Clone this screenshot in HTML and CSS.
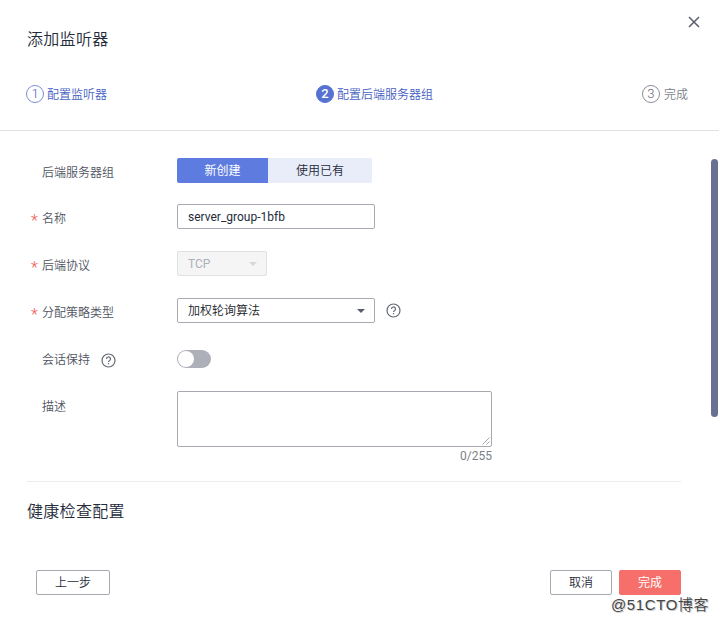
FILE: index.html
```html
<!DOCTYPE html>
<html lang="zh-CN">
<head>
<meta charset="utf-8">
<title>添加监听器</title>
<link rel="stylesheet" href="styles.css">
</head>
<body>
<main class="dialog">
  <header class="header">
    <div class="title-row">
      <h1 class="title">添加监听器</h1>
      <button class="close" aria-label="关闭"><svg width="12" height="12" viewBox="0 0 12 12"><path d="M1 1l10 10M11 1L1 11"/></svg></button>
    </div>
    <ol class="steps">
      <li class="step done"><span class="num">1</span><span class="name">配置监听器</span></li>
      <li class="step current"><span class="num">2</span><span class="name">配置后端服务器组</span></li>
      <li class="step"><span class="num">3</span><span class="name">完成</span></li>
    </ol>
  </header>
  <section class="body">
    <div class="form">
      <div class="row first"><span class="label">后端服务器组</span>
        <div class="tabs"><button class="tab active">新创建</button><button class="tab">使用已有</button></div></div>
      <div class="row"><span class="label"><i class="req">*</i>名称</span><div class="field">server_group-1bfb</div></div>
      <div class="row"><span class="label"><i class="req">*</i>后端协议</span><div class="field disabled">TCP<span class="caret"></span></div></div>
      <div class="row"><span class="label"><i class="req">*</i>分配策略类型</span><div class="field cjk">加权轮询算法<span class="caret"></span></div>
        <svg class="help" width="15" height="15" viewBox="0 0 15 15"><circle cx="7.5" cy="7.5" r="6.5"/><path d="M5.5 6a2 2 0 1 1 3 1.7Q7.5 8.2 7.5 9M7.5 10v1.3"/></svg></div>
      <div class="row"><span class="label">会话保持<svg class="help" width="15" height="15" viewBox="0 0 15 15"><circle cx="7.5" cy="7.5" r="6.5"/><path d="M5.5 6a2 2 0 1 1 3 1.7Q7.5 8.2 7.5 9M7.5 10v1.3"/></svg></span>
        <div class="toggle"><span class="knob"></span></div></div>
      <div class="row desc"><span class="label">描述</span>
        <div class="area-wrap"><div class="area"><svg width="8" height="8" viewBox="0 0 8 8"><path d="M0.5 7.5l7-7M4.5 7.5l3-3"/></svg></div><span class="count">0/255</span></div></div>
    </div>
    <h2 class="section-title">健康检查配置</h2>
    <div class="scrollbar"></div>
  </section>
  <footer class="footer">
    <button class="btn prev">上一步</button>
    <button class="btn">取消</button>
    <button class="btn primary">完成</button>
  </footer>
  <div class="watermark">@51CTO博客</div>
</main>
</body>
</html>
```
FILE: styles.css
```css
* { box-sizing: border-box; }
body {
  margin: 0;
  background: #fff;
  color: #252b3a;
  font: 350 12px/18px Roboto, "Noto Sans CJK SC", sans-serif;
}
button { font: inherit; color: inherit; padding: 0; border: 0; background: none; }
.dialog { position: relative; width: 719px; height: 622px; overflow: hidden; }
.header { height: 131px; border-bottom: 1px solid #dfe1e6; padding: 0 19px 0 27px; }
.title-row { display: flex; justify-content: space-between; height: 84px; }
.title { margin: 28px 0 0; font-size: 16px; line-height: 24px; font-weight: 350; letter-spacing: .3px; }
.close { width: 12px; height: 12px; margin-top: 16px; display: flex; }
.close path { stroke: #575d6c; stroke-width: 1.5; fill: none; }
.steps { display: flex; justify-content: space-between; list-style: none; margin: 0 12px 0 -1px; padding: 0; }
.step { display: flex; align-items: center; gap: 3px; height: 20px; color: #7b7f88; }
.name { padding-top: 2px; }
.num {
  width: 18px; height: 18px; border: 1px solid #8a8e99; border-radius: 50%;
  font-size: 13px; line-height: 16px; text-align: center; font-weight: 300;
}
.step.done, .step.current { color: #4660c2; }
.step.done .num { border-color: #7d8fd5; }
.step.current .num { background: #5571d2; border-color: #5571d2; color: #fff; font-weight: 500; }
.step:last-child { gap: 4px; }
.step:last-child .num { color: #666a74; }
.body { position: relative; height: 418px; padding: 27px 0 0 27px; }
.form { width: 654px; height: 324px; border-bottom: 1px solid #ebecee; }
.row { display: flex; align-items: center; height: 25px; margin-bottom: 22px; }
.row.first { margin-bottom: 21px; }
.label { position: relative; display: flex; align-items: center; width: 150px; padding: 5px 0 0 15px; color: #505562; }
.req { position: absolute; left: 4px; top: 7px; color: #f35a53; font: 300 16px/18px Roboto, sans-serif; }
.tabs { display: flex; border-radius: 2px; overflow: hidden; }
.tab { width: 104px; height: 25px; background: #e9edfa; }
.tab.active { width: 91px; background: #5e7ce0; color: #fff; font-weight: 400; }
.field {
  display: flex; align-items: center; justify-content: space-between;
  width: 198px; height: 25px; padding: 0 9px 0 10px;
  border: 1px solid #a7aab0; border-radius: 2px; color: #252b3a; font-weight: 400;
}
.field.cjk { color: #181c28; font-weight: 350; }
.field + .help { margin-left: 11px; }
.field.disabled { width: 90px; background: #f5f5f6; border-color: #dfe1e6; color: #adb0b8; }
.caret { border: 4px solid transparent; border-top-color: #575d6c; border-bottom: 0; }
.disabled .caret { border-top-color: #d5d7dc; }
.help { fill: none; stroke: #636873; stroke-width: 1.2; }
.label .help { margin-left: 11px; }
.toggle { width: 34px; height: 18px; margin-top: 3px; padding: 1px; border-radius: 9px; background: #adb0b8; }
.knob { display: block; width: 16px; height: 16px; border-radius: 50%; background: #fff; }
.row.desc { align-items: flex-start; height: 76px; margin: -1px 0 0; }
.desc .label { padding-top: 7px; }
.area-wrap { width: 315px; }
.area {
  display: flex; justify-content: flex-end; align-items: flex-end; height: 56px; padding: 1px;
  border: 1px solid #a7aab0; border-radius: 2px;
}
.area path { fill: none; stroke: #8a8e99; stroke-width: .8; }
.count { display: block; text-align: right; color: #7b7f88; font-weight: 400; }
.section-title { margin: 18px 0 0; font-size: 16px; line-height: 24px; font-weight: 350; letter-spacing: .3px; }
.scrollbar { position: absolute; left: 711px; top: 28px; width: 7px; height: 258px; border-radius: 4px; background: #6a7091; }
.footer { display: flex; gap: 7px; padding: 21px 38px 0 36px; }
.btn { width: 62px; height: 25px; border: 1px solid #a7aab0; border-radius: 2px; }
.btn.prev { width: 74px; margin-right: auto; }
.btn.primary { background: #f66f6a; border-color: #f66f6a; color: #fff; font-weight: 400; }
.watermark {
  position: absolute; left: 611px; top: 595px; white-space: nowrap;
  font: 350 15px/20px "Liberation Sans", "Noto Sans CJK SC", sans-serif;
  letter-spacing: .6px; color: #444; text-shadow: 1px 1px 0 #d0d0d0;
}
```
